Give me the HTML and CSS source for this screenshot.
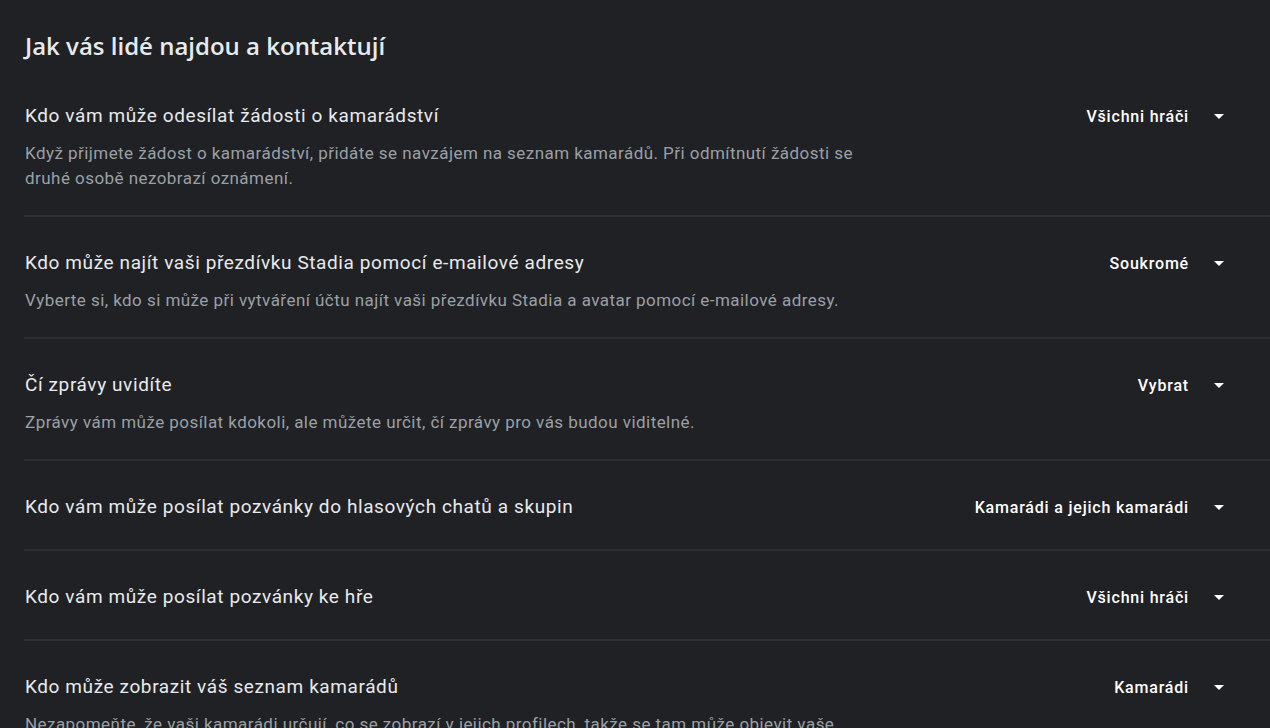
FILE: index.html
```html
<!DOCTYPE html>
<html lang="cs">
<head>
<meta charset="utf-8">
<title>Soukromí</title>
<link rel="stylesheet" href="styles.css">
</head>
<body>
<main class="page">
  <h1 class="heading">Jak vás lidé najdou a kontaktují</h1>

  <section class="row">
    <div class="row-head">
      <span class="row-title">Kdo vám může odesílat žádosti o kamarádství</span>
      <button class="select"><span class="select-value">Všichni hráči</span><span class="caret"></span></button>
    </div>
    <p class="row-desc">Když přijmete žádost o kamarádství, přidáte se navzájem na seznam kamarádů. Při odmítnutí žádosti se druhé osobě nezobrazí oznámení.</p>
  </section>

  <section class="row">
    <div class="row-head">
      <span class="row-title">Kdo může najít vaši přezdívku Stadia pomocí e-mailové adresy</span>
      <button class="select"><span class="select-value">Soukromé</span><span class="caret"></span></button>
    </div>
    <p class="row-desc">Vyberte si, kdo si může při vytváření účtu najít vaši přezdívku Stadia a avatar pomocí e-mailové adresy.</p>
  </section>

  <section class="row">
    <div class="row-head">
      <span class="row-title">Čí zprávy uvidíte</span>
      <button class="select"><span class="select-value">Vybrat</span><span class="caret"></span></button>
    </div>
    <p class="row-desc">Zprávy vám může posílat kdokoli, ale můžete určit, čí zprávy pro vás budou viditelné.</p>
  </section>

  <section class="row row-plain">
    <div class="row-head">
      <span class="row-title">Kdo vám může posílat pozvánky do hlasových chatů a skupin</span>
      <button class="select"><span class="select-value">Kamarádi a jejich kamarádi</span><span class="caret"></span></button>
    </div>
  </section>

  <section class="row row-plain">
    <div class="row-head">
      <span class="row-title">Kdo vám může posílat pozvánky ke hře</span>
      <button class="select"><span class="select-value">Všichni hráči</span><span class="caret"></span></button>
    </div>
  </section>

  <section class="row">
    <div class="row-head">
      <span class="row-title">Kdo může zobrazit váš seznam kamarádů</span>
      <button class="select"><span class="select-value">Kamarádi</span><span class="caret"></span></button>
    </div>
    <p class="row-desc">Nezapomeňte, že vaši kamarádi určují, co se zobrazí v jejich profilech, takže se tam může objevit vaše jméno a další informace.</p>
  </section>
</main>
</body>
</html>
```
FILE: styles.css
```css
html, body {
  margin: 0;
  padding: 0;
  background: #202124;
  overflow: hidden;
}

.page {
  padding: 30px 0 0 24px;
  font-family: Roboto, "Liberation Sans", sans-serif;
  color: #e8eaed;
}

.heading {
  margin: 0 0 8px 1px;
  font-family: "Open Sans", Roboto, sans-serif;
  font-size: 24px;
  line-height: 32px;
  font-weight: 600;
  color: #e8eaed;
}

.row {
  padding: 24px 0 20px;
  border-bottom: 2px solid #2d2e31;
}

.row-head {
  display: flex;
  align-items: center;
  justify-content: space-between;
  height: 44px;
  padding-right: 46px;
}

.row-title {
  font-size: 19px;
  line-height: 24px;
  letter-spacing: 0.6px;
  color: #e8eaed;
  padding-left: 1px;
}

.select {
  display: flex;
  align-items: center;
  background: none;
  border: 0;
  padding: 0;
  font-family: Roboto, "Liberation Sans", sans-serif;
  font-size: 16px;
  font-weight: 500;
  letter-spacing: 0.8px;
  color: #ffffff;
}

.caret {
  width: 0;
  height: 0;
  margin-left: 25px;
  border-left: 5px solid transparent;
  border-right: 5px solid transparent;
  border-top: 5px solid #ffffff;
}

.row-desc {
  margin: 0;
  padding: 3px 0 4px 1px;
  max-width: 840px;
  font-size: 17px;
  line-height: 25px;
  letter-spacing: 0.45px;
  color: #9aa0a6;
}
```
